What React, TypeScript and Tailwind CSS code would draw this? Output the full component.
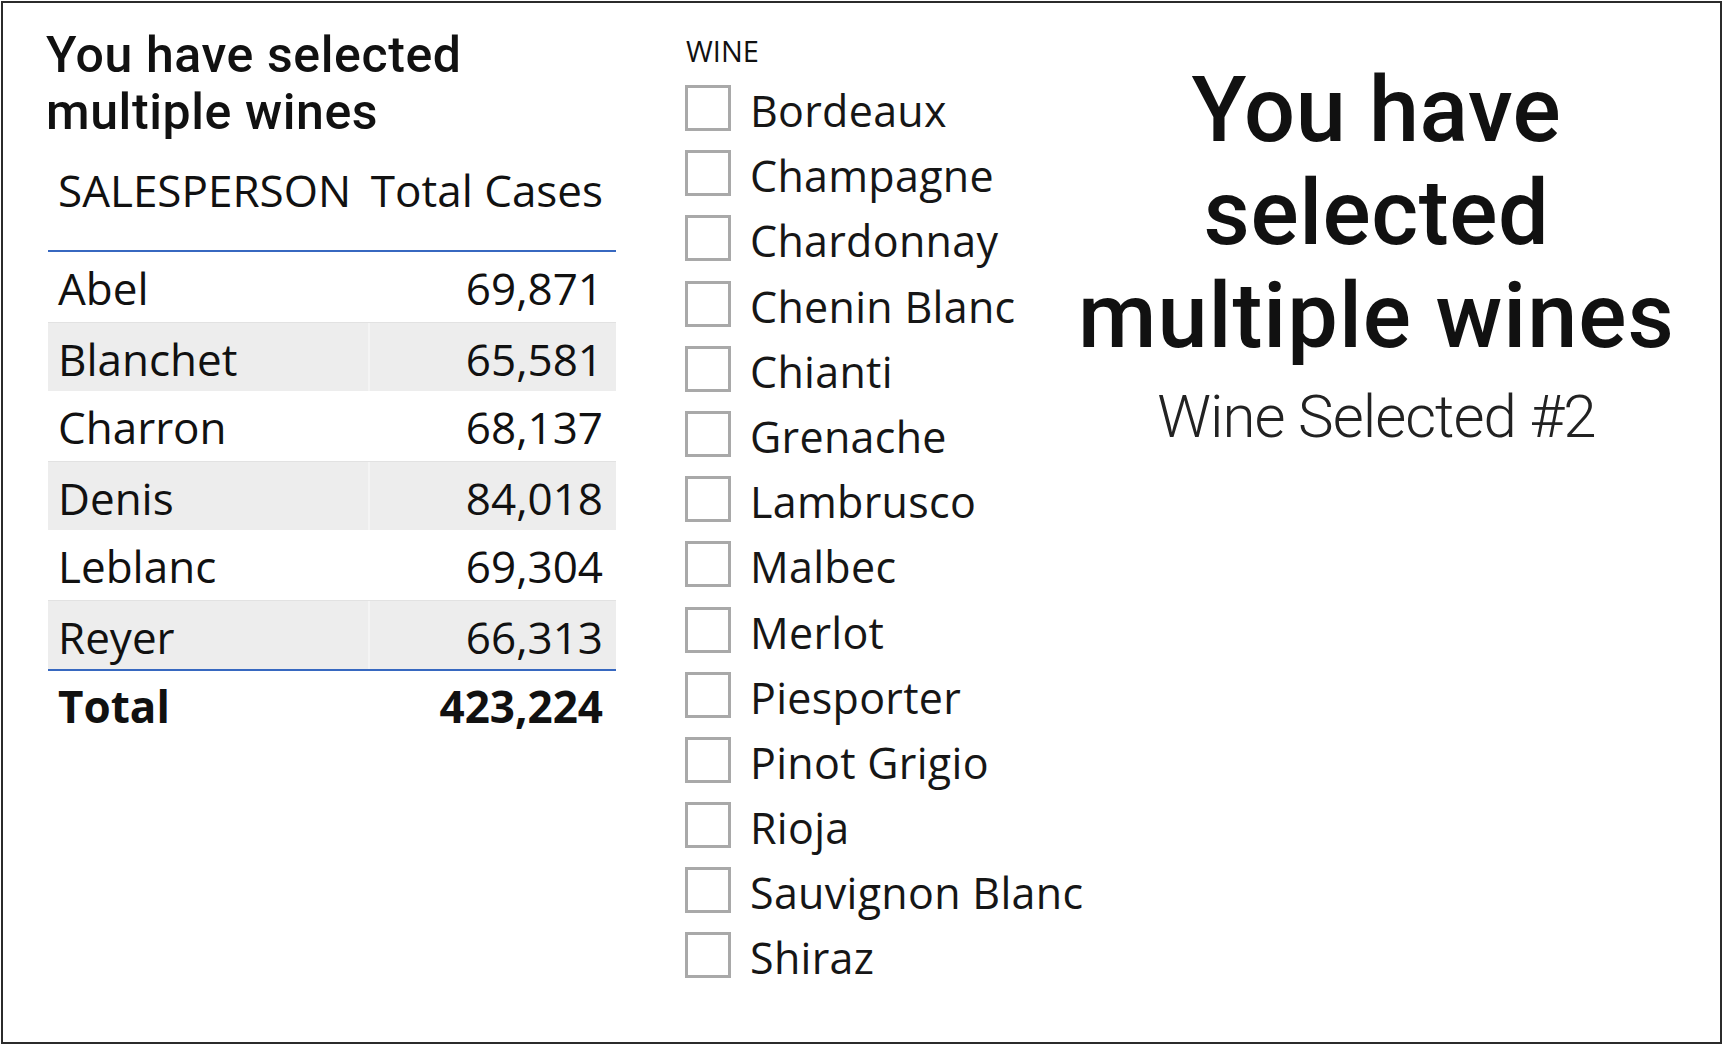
import React from "react";

const rows = [
  { name: "Abel", value: "69,871" },
  { name: "Blanchet", value: "65,581" },
  { name: "Charron", value: "68,137" },
  { name: "Denis", value: "84,018" },
  { name: "Leblanc", value: "69,304" },
  { name: "Reyer", value: "66,313" },
];

const wines = [
  "Bordeaux",
  "Champagne",
  "Chardonnay",
  "Chenin Blanc",
  "Chianti",
  "Grenache",
  "Lambrusco",
  "Malbec",
  "Merlot",
  "Piesporter",
  "Pinot Grigio",
  "Rioja",
  "Sauvignon Blanc",
  "Shiraz",
];

const din = { fontFamily: "Roboto, 'Liberation Sans', sans-serif" };
const segoe = { fontFamily: "'Open Sans', 'Noto Sans', sans-serif" };

export default function App() {
  return (
    <div className="w-[1725px] h-[1048px] bg-white pl-[1px] pt-[1px]">
      <div className="w-[1721px] h-[1043px] border-2 border-[#2b2b2b] flex text-[#111]">
        {/* Left: title + table */}
        <div className="w-[613px] shrink-0 pl-[45px] pt-[24px]">
          <div
            className="ml-[-2px] text-[50px] leading-[57px] font-medium tracking-[0.6px] whitespace-nowrap"
            style={din}
          >
            <div>You have selected</div>
            <div>multiple wines</div>
          </div>
          <div className="w-[568px]" style={segoe}>
            <div className="mt-[19px] h-[92px] border-b-2 border-[#3768c0] flex text-[44px] leading-[60px]">
              <div className="w-[320px] pl-[10px] whitespace-nowrap">SALESPERSON</div>
              <div className="flex-1 pr-[13px] text-right whitespace-nowrap">Total Cases</div>
            </div>
            <div className="border-b-2 border-[#3768c0]">
              {rows.map((r, i) => (
                <div
                  key={r.name}
                  className={
                    i % 2 === 1
                      ? "h-[69.5px] flex bg-[#ededed] border-t border-[#e2e2e2] text-[44px] leading-[59.5px]"
                      : "h-[69.5px] flex text-[44px] leading-[59.5px]"
                  }
                >
                  <div className="w-[320px] pl-[10px] pt-[7px] whitespace-nowrap">{r.name}</div>
                  <div
                    className={
                      i % 2 === 1
                        ? "flex-1 pr-[13px] pt-[7px] text-right border-l-2 border-[#f4f4f4]"
                        : "flex-1 pr-[13px] pt-[7px] text-right"
                    }
                  >
                    {r.value}
                  </div>
                </div>
              ))}
            </div>
            <div className="h-[69.5px] flex text-[44px] leading-[59.5px] font-bold">
              <div className="w-[320px] pl-[10px] pt-[6px]">Total</div>
              <div className="flex-1 pr-[13px] pt-[6px] text-right">423,224</div>
            </div>
          </div>
        </div>

        {/* Middle: slicer */}
        <div className="ml-[69px] w-[393px] shrink-0 pt-[28px]" style={segoe}>
          <div className="text-[29px] leading-[40px] pl-[1px] text-[#111]">WINE</div>
          <div className="mt-[5px]">
            {wines.map((w) => (
              <div key={w} className="h-[65.2px] flex items-start">
                <div className="mt-[9px] w-[46px] h-[46px] shrink-0 border-[3px] border-[#a9a9a9] bg-white" />
                <div className="ml-[19px] mt-[5px] text-[43px] leading-[60px] tracking-[0.3px] whitespace-nowrap text-[#161616]">
                  {w}
                </div>
              </div>
            ))}
          </div>
        </div>

        {/* Right: big message */}
        <div className="flex-1 pr-[48px] pt-[56px] flex flex-col items-center" style={din}>
          <div className="text-[90px] leading-[103px] font-medium tracking-[0.5px] whitespace-nowrap">You have</div>
          <div className="text-[90px] leading-[103px] font-medium tracking-[0.5px] whitespace-nowrap">selected</div>
          <div className="text-[90px] leading-[103px] font-medium tracking-[1px] whitespace-nowrap">multiple wines</div>
          <div className="mt-[14px] text-[60px] leading-[70px] font-light tracking-[-1px] whitespace-nowrap text-[#222]">
            Wine Selected #2
          </div>
        </div>
      </div>
    </div>
  );
}
